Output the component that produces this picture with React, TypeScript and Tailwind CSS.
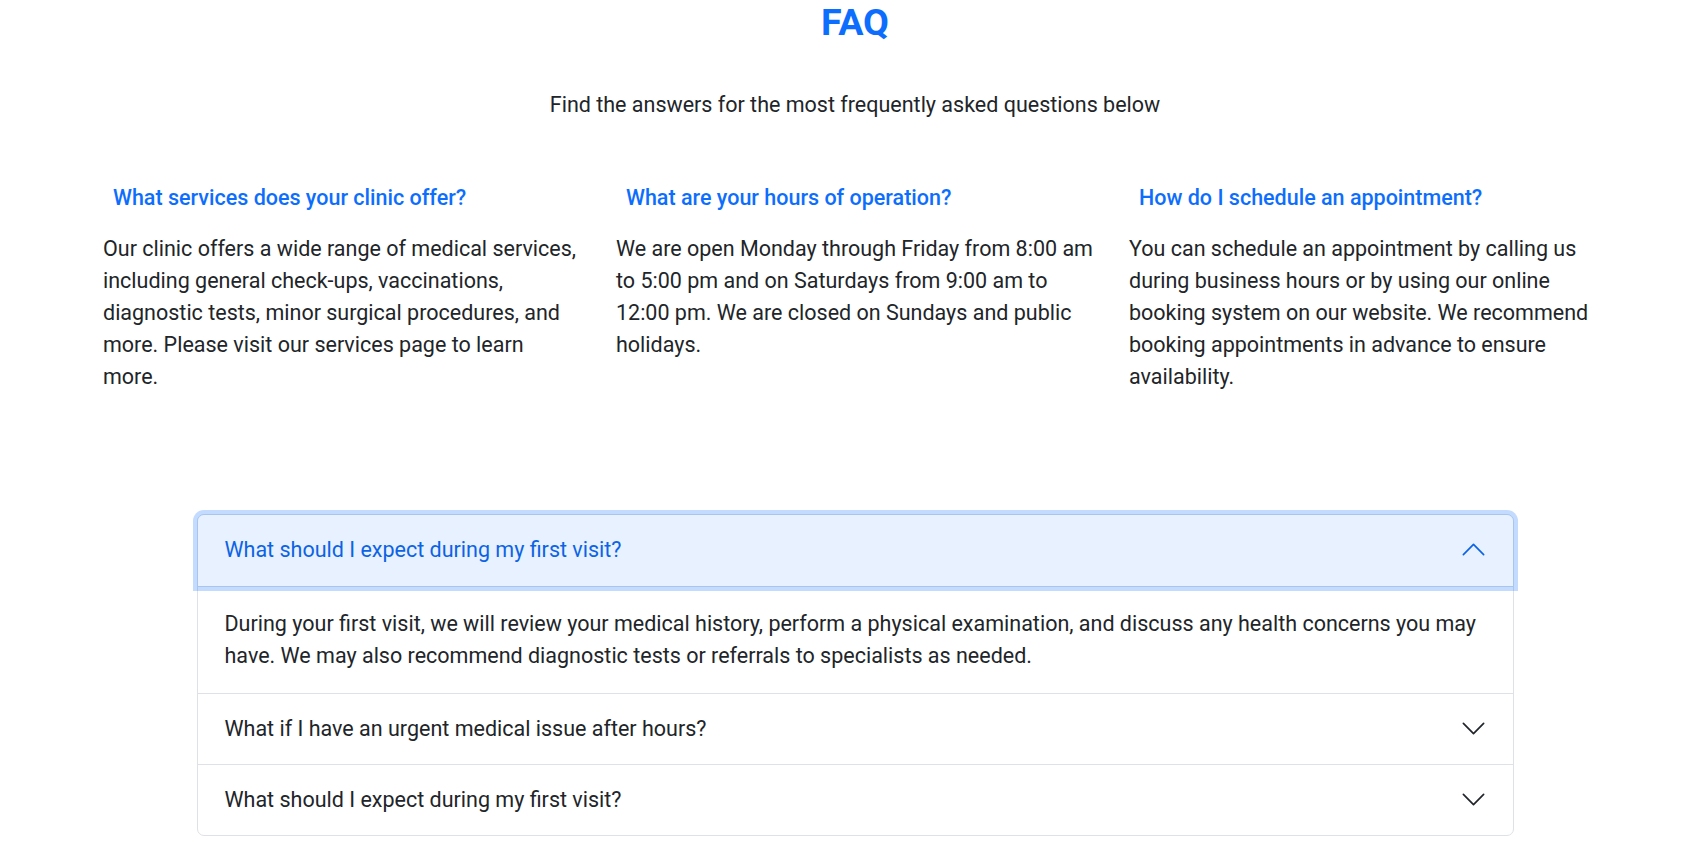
import { useState } from 'react';

interface FaqCard {
  question: string;
  answer: string;
}

const faqCards: FaqCard[] = [
  {
    question: 'What services does your clinic offer?',
    answer:
      'Our clinic offers a wide range of medical services, including general check-ups, vaccinations, diagnostic tests, minor surgical procedures, and more. Please visit our services page to learn more.',
  },
  {
    question: 'What are your hours of operation?',
    answer:
      'We are open Monday through Friday from 8:00 am to 5:00 pm and on Saturdays from 9:00 am to 12:00 pm. We are closed on Sundays and public holidays.',
  },
  {
    question: 'How do I schedule an appointment?',
    answer:
      'You can schedule an appointment by calling us during business hours or by using our online booking system on our website. We recommend booking appointments in advance to ensure availability.',
  },
];

const accordionItems: FaqCard[] = [
  {
    question: 'What should I expect during my first visit?',
    answer:
      'During your first visit, we will review your medical history, perform a physical examination, and discuss any health concerns you may have. We may also recommend diagnostic tests or referrals to specialists as needed.',
  },
  {
    question: 'What if I have an urgent medical issue after hours?',
    answer:
      'If you have an urgent medical issue after hours, please call our after-hours line or visit the nearest emergency department.',
  },
  {
    question: 'What should I expect during my first visit?',
    answer:
      'During your first visit, we will review your medical history, perform a physical examination, and discuss any health concerns you may have.',
  },
];

const Chevron = ({ up, className }: { up?: boolean; className?: string }) => (
  <svg
    viewBox="0 0 16 16"
    fill="none"
    stroke="currentColor"
    strokeLinecap="round"
    strokeLinejoin="round"
    className={`w-[27px] h-[27px] shrink-0 ${up ? 'rotate-180' : ''} ${className ?? ''}`}>
    <path d="M2 5L8 11L14 5" />
  </svg>
);

export default function App() {
  const [open, setOpen] = useState<number | null>(0);

  return (
    <div className="min-h-screen bg-white pl-[8px] font-['Roboto','Liberation_Sans',sans-serif] text-[#212529]">
      <h1 className="text-center text-[37.6px] font-bold leading-[1.2] text-[#0d6efd]">FAQ</h1>
      <p className="mt-[44px] text-center text-[21.5px] leading-[32px]">
        Find the answers for the most frequently asked questions below
      </p>

      <section className="mt-[64px] ml-[95px] grid grid-cols-[repeat(3,480px)] gap-x-[33px]">
        {faqCards.map((card, idx) => (
          <div key={idx}>
            <h5 className="pl-[10px] text-[21.5px] font-medium leading-[1.2] text-[#0d6efd]">{card.question}</h5>
            <p className="mt-[22px] text-[21.5px] leading-[32px]">{card.answer}</p>
          </div>
        ))}
      </section>

      <div className="mt-[121px] mx-auto w-[1317px] rounded-[7px] border border-[#dee2e6] bg-white">
        {accordionItems.map((item, idx) => {
          const isOpen = open === idx;
          const isLast = idx === accordionItems.length - 1;
          return (
            <div key={idx} className={`${idx > 0 ? 'border-t border-[#dee2e6]' : ''}`}>
              <button
                type="button"
                onClick={() => setOpen(isOpen ? null : idx)}
                className={`relative w-full flex items-center justify-between pl-[27px] pr-[26px] pt-[19px] text-left text-[21.5px] leading-[32px] ${
                  isOpen
                    ? 'pb-[20px] z-10 bg-[#e7f1ff] text-[#0c63e4] rounded-t-[6px] shadow-[0_0_0_5px_rgba(13,110,253,0.25)]'
                    : `pb-[19px] text-[#212529] ${isLast ? 'rounded-b-[6px]' : ''}`
                }`}>
                <span>{item.question}</span>
                <Chevron up={isOpen} />
              </button>
              {isOpen && (
                <div className="px-[27px] pt-[21px] pb-[21px] text-[21.5px] leading-[32px] border-t border-[#dee2e6]">
                  {item.answer}
                </div>
              )}
            </div>
          );
        })}
      </div>
    </div>
  );
}
